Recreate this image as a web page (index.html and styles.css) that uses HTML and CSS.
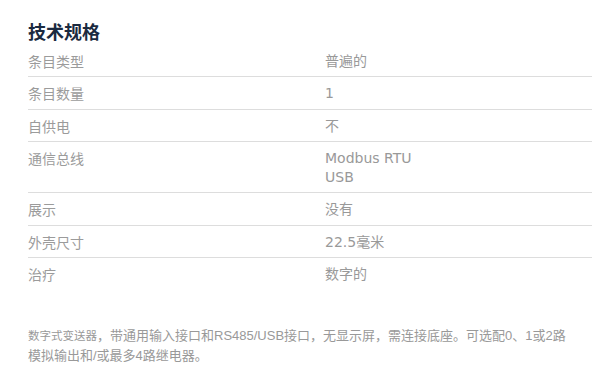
FILE: index.html
```html
<!DOCTYPE html>
<html lang="zh-CN">
<head>
<meta charset="utf-8">
<title>技术规格</title>
<link rel="stylesheet" href="styles.css">
</head>
<body>
<section class="specs">
  <h2 class="specs-title">技术规格</h2>
  <dl class="spec-list">
    <div class="spec-row"><dt>条目类型</dt><dd>普遍的</dd></div>
    <div class="spec-row"><dt>条目数量</dt><dd>1</dd></div>
    <div class="spec-row"><dt>自供电</dt><dd>不</dd></div>
    <div class="spec-row"><dt>通信总线</dt><dd>Modbus RTU<br>USB</dd></div>
    <div class="spec-row"><dt>展示</dt><dd>没有</dd></div>
    <div class="spec-row"><dt>外壳尺寸</dt><dd>22.5毫米</dd></div>
    <div class="spec-row last"><dt>治疗</dt><dd>数字的</dd></div>
  </dl>
</section>
<p class="note"><span class="note-lead">数字式变送器</span>，带通用输入接口和RS485/USB接口，无显示屏，需连接底座。可选配0、1或2路<br>模拟输出和/或最多4路继电器。</p>
</body>
</html>
```

FILE: styles.css
```css
html, body {
  margin: 0;
  padding: 0;
  background: #ffffff;
}

body {
  font-family: "Noto Sans CJK SC", sans-serif;
  color: #999999;
}

.specs {
  width: 564px;
  padding: 19px 0 0 28px;
}

.specs-title {
  margin: 0 0 1.5px;
  font-size: 18px;
  line-height: 24px;
  font-weight: 700;
  color: #1b2a40;
}

.spec-list {
  margin: 0;
}

.spec-row {
  display: grid;
  grid-template-columns: 297px 1fr;
  padding: 7px 0 6px;
  border-bottom: 1px solid #dddddd;
  font-size: 14px;
  line-height: 18.5px;
}

.spec-row.last {
  border-bottom: 0;
}

.spec-row dt {
  color: #9b9b9b;
}

.spec-row dd {
  margin: 0;
  color: #999999;
  font-family: "DejaVu Sans", "Noto Sans CJK SC", sans-serif;
  font-size: 14px;
}

.note {
  margin: 36px 0 0 28px;
  font-family: "Liberation Sans", "Noto Sans CJK SC", sans-serif;
  font-size: 13px;
  line-height: 20.5px;
  color: #999999;
}

.note-lead {
  font-size: 11.5px;
}
```
